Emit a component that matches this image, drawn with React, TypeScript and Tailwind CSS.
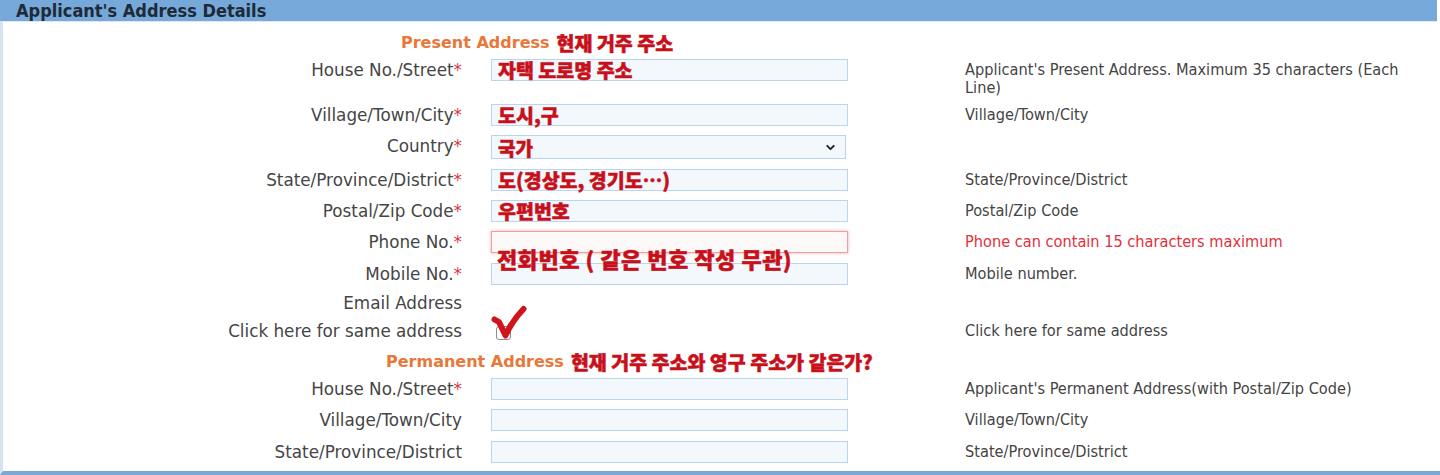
import { ChevronDown } from 'lucide-react';

type Row = {
  label: string;
  required?: boolean;
  value?: string;
  help?: string;
  helpRed?: boolean;
  height: string;
  kind?: 'input' | 'select' | 'phone';
};

const labelFont = { fontFamily: '"DejaVu Sans", Verdana, sans-serif' };
const helpFont = { fontFamily: '"DejaVu Sans Condensed", Tahoma, "Liberation Sans", sans-serif' };
const krFont = { fontFamily: '"Noto Sans CJK KR", "Noto Sans", sans-serif' };

const krText = 'font-black text-[#c8101a] [-webkit-text-stroke:0.5px_#c8101a]';

const present: Row[] = [
  {
    label: 'House No./Street',
    required: true,
    value: '자택 도로명 주소',
    help: "Applicant's Present Address. Maximum 35 characters (Each Line)",
    height: 'h-[45px]',
  },
  { label: 'Village/Town/City', required: true, value: '도시,구', help: 'Village/Town/City', height: 'h-[31px]' },
  { label: 'Country', required: true, value: '국가', height: 'h-[34px]', kind: 'select' },
  {
    label: 'State/Province/District',
    required: true,
    value: '도(경상도, 경기도…)',
    help: 'State/Province/District',
    height: 'h-[31px]',
  },
  { label: 'Postal/Zip Code', required: true, value: '우편번호', help: 'Postal/Zip Code', height: 'h-[31px]' },
  {
    label: 'Phone No.',
    required: true,
    help: 'Phone can contain 15 characters maximum',
    helpRed: true,
    height: 'h-[32px]',
    kind: 'phone',
  },
  { label: 'Mobile No.', required: true, help: 'Mobile number.', height: 'h-[31px]' },
];

const permanent: Row[] = [
  {
    label: 'House No./Street',
    required: true,
    help: "Applicant's Permanent Address(with Postal/Zip Code)",
    height: 'h-[31px]',
  },
  { label: 'Village/Town/City', help: 'Village/Town/City', height: 'h-[32px]' },
  { label: 'State/Province/District', help: 'State/Province/District', height: 'h-[31px]' },
];

function Field({ row }: { row: Row }) {
  if (row.kind === 'select') {
    return (
      <div className="mt-[2px] ml-[29px] flex h-[24px] w-[355px] items-center justify-between border border-[#b9d5ef] bg-[#f3f8fd] pl-[6px] pr-[8px]">
        <span className={`text-[19px] leading-none ${krText}`} style={krFont}>
          {row.value}
        </span>
        <ChevronDown size={13} strokeWidth={3.5} className="text-[#222]" />
      </div>
    );
  }
  if (row.kind === 'phone') {
    return (
      <div className="relative mt-[2px] ml-[29px]">
        <div className="h-[22px] w-[357px] border border-[#e9a2a2] bg-[#fdf8f8] shadow-[0_0_3px_rgba(220,60,60,0.45)]" />
        {/* annotation written over the phone / mobile fields */}
        <span
          className={`absolute left-[6px] top-[15px] whitespace-nowrap text-[22px] leading-[24px] tracking-[0.5px] ${krText}`}
          style={krFont}
        >
          전화번호 ( 같은 번호 작성 무관)
        </span>
      </div>
    );
  }
  return (
    <div className="mt-[2px] ml-[29px] flex h-[22px] w-[357px] items-center border border-[#b9d5ef] bg-[#f3f8fd] pl-[6px]">
      {row.value && (
        <span className={`text-[19.5px] leading-none ${krText}`} style={krFont}>
          {row.value}
        </span>
      )}
    </div>
  );
}

function FormRow({ row }: { row: Row }) {
  return (
    <div className={`flex items-start ${row.height}`}>
      <div className="w-[462px] pt-[2px] text-right text-[16.8px] leading-[22px] text-[#454545]" style={labelFont}>
        {row.label}
        {row.required && <span className="text-[#d9343f]">*</span>}
      </div>
      <div className="w-[503px]">
        <Field row={row} />
      </div>
      {row.help && (
        <div
          className={`w-[445px] pt-[4px] text-[16.2px] leading-[18px] ${row.helpRed ? 'text-[#e2303b]' : 'text-[#444]'}`}
          style={helpFont}
        >
          {row.help}
        </div>
      )}
    </div>
  );
}

function Heading({ en, kr, pad }: { en: string; kr: string; pad: string }) {
  return (
    <div className={`flex h-[28px] items-center ${pad} whitespace-nowrap`}>
      <span className="text-[16px] font-bold text-[#e8773a]" style={labelFont}>
        {en}
      </span>
      <span className={`ml-[7px] text-[19.5px] ${krText}`} style={krFont}>
        {kr}
      </span>
    </div>
  );
}

export default function App() {
  return (
    <div className="h-[475px] w-[1440px] overflow-hidden bg-white">
      {/* Section header */}
      <div className="flex h-[22px] w-[1437px] items-center border-b border-[#dbe8f5] bg-[#76a8d9] pl-[16px]">
        <span className="text-[18px] font-bold text-[#1e2a38]" style={helpFont}>
          Applicant's Address Details
        </span>
      </div>

      <div className="border-l-[3px] border-b-[4px] border-l-[#d3e3f4] border-b-[#78a9d9] pt-[7px] pb-[1px]">
        <div className="-ml-[3px]">
          <Heading en="Present Address" kr="현재 거주 주소" pad="pl-[401px]" />
          {present.map((r, i) => (
            <FormRow key={i} row={r} />
          ))}

          {/* Email */}
          <div className="flex h-[28px] items-start">
            <div className="w-[462px] text-right text-[16.8px] leading-[22px] text-[#454545]" style={labelFont}>
              Email Address
            </div>
          </div>

          {/* Same address checkbox */}
          <div className="flex h-[28px] items-start">
            <div className="w-[462px] text-right text-[16.8px] leading-[22px] text-[#454545]" style={labelFont}>
              Click here for same address
            </div>
            <div className="relative w-[503px]">
              <div className="ml-[34px] mt-[6px] h-[14px] w-[15px] rounded-[3px] border border-[#8a8a8a] bg-white" />
              <svg
                className="absolute left-[28px] top-[-15px]"
                width="40"
                height="38"
                viewBox="0 0 40 38"
                fill="none"
              >
                <path
                  d="M4.5 14.5 L9 17 L15.5 30.5 Q22 16 33.5 4"
                  stroke="#cf141c"
                  strokeWidth="6"
                  strokeLinecap="round"
                  strokeLinejoin="round"
                />
              </svg>
            </div>
            <div className="w-[445px] pt-[2px] text-[16.2px] leading-[18px] text-[#444]" style={helpFont}>
              Click here for same address
            </div>
          </div>

          <Heading en="Permanent Address" kr="현재 거주 주소와 영구 주소가 같은가?" pad="pl-[386px]" />
          {permanent.map((r, i) => (
            <FormRow key={i} row={r} />
          ))}
        </div>
      </div>
    </div>
  );
}
